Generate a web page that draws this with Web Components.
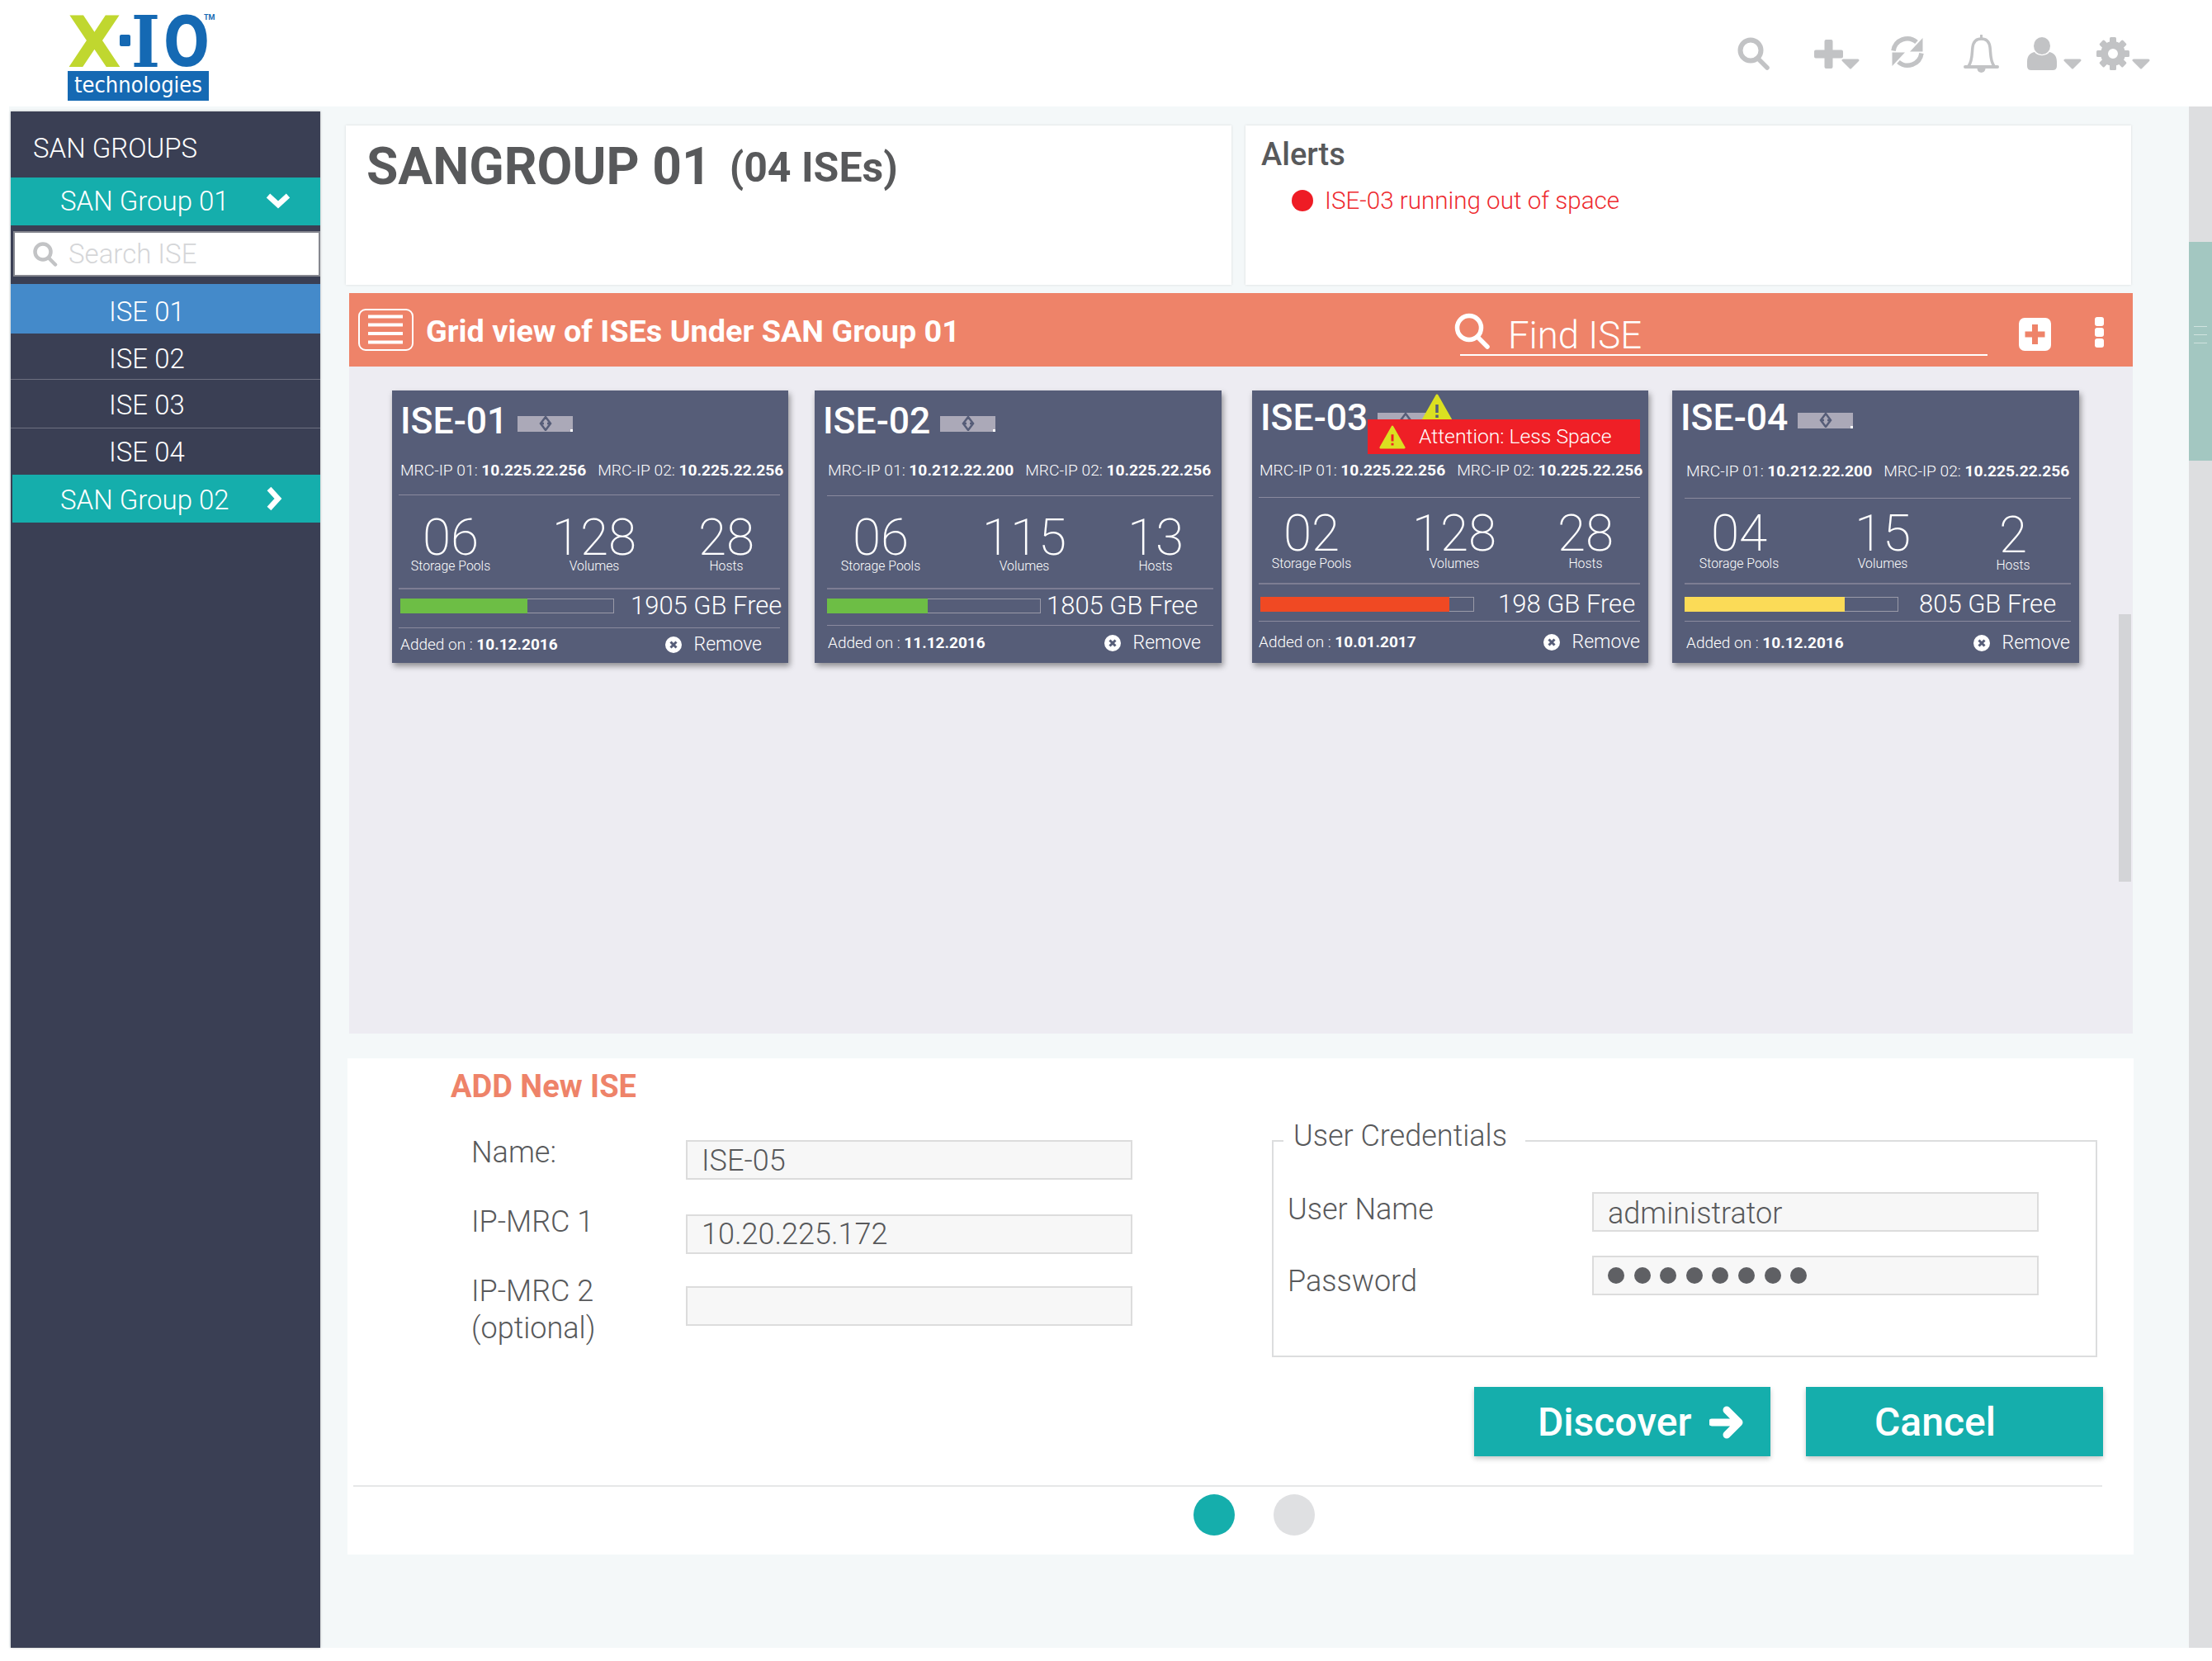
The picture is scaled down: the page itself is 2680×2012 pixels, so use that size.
<!DOCTYPE html>
<html>
<head>
<meta charset="utf-8">
<title>X-IO ISE grid</title>
<style>
  html, body { margin: 0; padding: 0; background: #fff; }
  body { font-family: Roboto, "Liberation Sans", sans-serif; color: #58595b; }
</style>
</head>
<body>
<xio-app>
  <xio-topbar slot="top"></xio-topbar>
  <xio-sidebar slot="side">
    <xio-nav kind="title">SAN GROUPS</xio-nav>
    <xio-nav kind="group" icon="down">SAN Group 01</xio-nav>
    <xio-search>Search ISE</xio-search>
    <xio-nav kind="active">ISE 01</xio-nav>
    <xio-nav kind="item">ISE 02</xio-nav>
    <xio-nav kind="item" style="height:59px;padding-top:4px">ISE 03</xio-nav>
    <xio-nav kind="last">ISE 04</xio-nav>
    <xio-nav kind="group2" icon="right">SAN Group 02</xio-nav>
  </xio-sidebar>

  <xio-overview>
    <span slot="title">SANGROUP 01</span>
    <span slot="count">(04 ISEs)</span>
    <span slot="alert">ISE-03 running out of space</span>
  </xio-overview>

  <xio-gridbar>Grid view of ISEs Under SAN Group 01</xio-gridbar>

  <xio-grid>
    <ise-card name="ISE-01" added="10.12.2016" free="1905 GB Free" fill="60" color="#6dbe45"
      style="margin-left:52px;width:480px;--r1:127px;--r2:114px;--r3:47px;--mx:8px;--cols:126px 222px 98px;--title-top:15px;--ip-gap:27px;--tx:2px;--ix:2px;--stat-top:20px;--lab:-6px;--bx:2px;--bt:11px;--fx:20px;--rr:22px;--fb:3px;--ft:0px">
      <span slot="ip1">10.225.22.256</span><span slot="ip2">10.225.22.256</span>
      <ise-stat slot="stats" value="06">Storage Pools</ise-stat>
      <ise-stat slot="stats" value="128">Volumes</ise-stat>
      <ise-stat slot="stats" value="28">Hosts</ise-stat>
    </ise-card>
    <ise-card name="ISE-02" added="11.12.2016" free="1805 GB Free" fill="47.5" color="#6dbe45"
      style="margin-left:32px;width:493px;--r1:128px;--r2:113px;--r3:44px;--mx:15px;--cols:130px 218px 100px;--title-top:15px;--ip-gap:27px;--tx:-5px;--ix:1px;--stat-top:19px;--lab:-6px;--bx:0px;--bt:11px;--fx:7px;--rr:15px;--fb:3px;--ft:0px">
      <span slot="ip1">10.212.22.200</span><span slot="ip2">10.225.22.256</span>
      <ise-stat slot="stats" value="06">Storage Pools</ise-stat>
      <ise-stat slot="stats" value="115">Volumes</ise-stat>
      <ise-stat slot="stats" value="13">Hosts</ise-stat>
    </ise-card>
    <ise-card name="ISE-03" added="10.01.2017" free="198 GB Free" fill="89" color="#f04923"
      style="margin-left:37px;width:480px;--r1:130px;--r2:105px;--r3:45px;--mx:8px;--cols:128px 218px 100px;--title-top:11px;--ip-gap:31px;--tx:2px;--ix:1px;--stat-top:12px;--lab:-4px;--bx:2px;--bt:15px;--fx:29px;--rr:-2px;--fb:0px;--ft:2px">
      <span slot="ip1">10.225.22.256</span><span slot="ip2">10.225.22.256</span>
      <ise-stat slot="stats" value="02">Storage Pools</ise-stat>
      <ise-stat slot="stats" value="128">Volumes</ise-stat>
      <ise-stat slot="stats" value="28">Hosts</ise-stat>
      <ise-warning slot="over">Attention: Less Space</ise-warning>
    </ise-card>
    <ise-card name="ISE-04" added="10.12.2016" free="805 GB Free" fill="75.5" color="#fbdb57"
      style="margin-left:29px;width:493px;--r1:131px;--r2:104px;--r3:45px;--mx:15px;--cols:132px 216px 100px;--title-top:11px;--ip-gap:32px;--tx:-5px;--ix:2px;--stat-top:11px;--lab:-4px;--bx:0px;--bt:15px;--fx:25px;--rr:1px;--fb:0px;--ft:2px">
      <span slot="ip1">10.212.22.200</span><span slot="ip2">10.225.22.256</span>
      <ise-stat slot="stats" value="04">Storage Pools</ise-stat>
      <ise-stat slot="stats" value="15">Volumes</ise-stat>
      <ise-stat slot="stats" value="2" style="padding-top:2px">Hosts</ise-stat>
    </ise-card>
  </xio-grid>

  <xio-addform></xio-addform>
</xio-app>

<script>
const GREY = "#c2c3c5";

const caret = `<svg width="22" height="13" viewBox="0 0 22 13"><polygon points="2,2 20,2 11,11" fill="${GREY}" stroke="${GREY}" stroke-width="3" stroke-linejoin="round"/></svg>`;

class XioApp extends HTMLElement {
  constructor() {
    super();
    this.attachShadow({ mode: "open" });
    this.shadowRoot.innerHTML = `
      <style>
        :host { display: block; width: 2680px; height: 2012px; overflow: hidden; background: #fff; }
        .row { display: flex; height: 1867px; margin-left: 11px; background: #f4f8f9; }
        .side { margin: 6px 0 0 2px; }
        .main { margin-left: 31px; width: 2233px; padding-top: 23px; }
        .track { position: relative; width: 28px; height: 100%; background: #dddee0; }
        .thumb { margin-top: 164px; height: 265px; background: #a3c7c1; display: flex; flex-direction: column; align-items: center; padding-top: 102px; box-sizing: border-box; gap: 9px; }
        .thumb i { display: block; width: 16px; height: 1px; background: #d0e3df; }
      </style>
      <slot name="top"></slot>
      <div class="row">
        <div class="side"><slot name="side"></slot></div>
        <div class="main"><slot></slot></div>
        <div class="track"><div class="thumb"><i></i><i></i><i></i></div></div>
      </div>
    `;
  }
}

class XioLogo extends HTMLElement {
  constructor() {
    super();
    this.attachShadow({ mode: "open" });
    this.shadowRoot.innerHTML = `
      <style>:host { display: block; width: 180px; height: 108px; } svg { display: block; overflow: visible; }</style>
      <svg width="180" height="108" viewBox="0 0 180 108">
        <text x="0" y="63" font-family="DejaVu Sans" font-weight="700" font-size="86" fill="#c0d72f" textLength="65" lengthAdjust="spacingAndGlyphs">X</text>
        <rect x="63" y="24" width="13" height="14" rx="2" fill="#1569b3"/>
        <text x="77" y="63" font-family="DejaVu Serif" font-weight="700" font-size="86" fill="#1569b3" textLength="35" lengthAdjust="spacingAndGlyphs">I</text>
        <text x="116" y="62" font-family="DejaVu Sans" font-weight="700" font-size="84" fill="#1569b3" textLength="56" lengthAdjust="spacingAndGlyphs">O</text>
        <text x="165" y="6" font-family="Roboto" font-weight="700" font-size="9" fill="#1569b3">TM</text>
        <rect x="0" y="68" width="171" height="36" fill="#1569b3"/>
        <text x="8" y="94" font-family="DejaVu Sans" font-size="26" fill="#fff" textLength="155" lengthAdjust="spacingAndGlyphs">technologies</text>
      </svg>
    `;
  }
}

class XioTopbar extends HTMLElement {
  constructor() {
    super();
    this.attachShadow({ mode: "open" });
    const gearTeeth = [0, 45, 90, 135, 180, 225, 270, 315]
      .map((a) => `<rect x="16" y="0" width="8" height="9" rx="1.5" transform="rotate(${a} 20 20)"/>`)
      .join("");
    this.shadowRoot.innerHTML = `
      <style>
        :host { display: flex; height: 129px; background: #fff; position: relative; }
        xio-logo { margin: 18px 0 0 82px; }
        .icons { display: flex; align-items: flex-start; margin-left: auto; margin-right: 75px; padding-top: 42px; }
        svg { display: block; }
        .with-caret { display: flex; align-items: flex-start; }
        .with-caret > svg:last-child { margin-top: 29px; }
      </style>
      <xio-logo></xio-logo>
      <div class="icons">
        <svg style="margin-top:3px" width="40" height="40" viewBox="0 0 40 40" fill="none" stroke="${GREY}"><circle cx="16" cy="16" r="12.5" stroke-width="6"/><line x1="25" y1="26" x2="36" y2="37" stroke-width="5.5" stroke-linecap="round"/></svg>
        <div class="with-caret" style="margin-left:53px">
          <svg style="margin:6px -2px 0 0" width="35" height="35" viewBox="0 0 35 35" fill="${GREY}"><path d="M12.5 2q0-2 2-2h6q2 0 2 2v10.500h10.500q2 0 2 2v6q0 2-2 2h-10.500v10.500q0 2-2 2h-6q-2 0-2-2v-10.500h-10.500q-2 0-2-2v-6q0-2 2-2h10.500z"/></svg>
          ${caret}
        </div>
        <svg style="margin:1px 0 0 38px" width="40" height="40" viewBox="0 0 40 40" fill="${GREY}">
          <path d="M3 18.500A17 17 0 0 1 31 8" fill="none" stroke="${GREY}" stroke-width="5.500"/>
          <polygon points="38.500,3 38.500,19.500 23,19.500"/>
          <path d="M37 21.500A17 17 0 0 1 9 32" fill="none" stroke="${GREY}" stroke-width="5.500"/>
          <polygon points="1.500,37 1.500,20.500 17,20.500"/>
        </svg>
        <svg style="margin-left:48px" width="43" height="46" viewBox="0 0 43 46" fill="none" stroke="${GREY}">
          <path d="M6 38C11 32 10 22 11 15C12 8 16 5 21.500 5C27 5 31 8 32 15C33 22 32 32 37 38" stroke-width="3.500"/>
          <line x1="2" y1="39" x2="41" y2="39" stroke-width="4" stroke-linecap="round"/>
          <line x1="21.500" y1="1" x2="21.500" y2="5" stroke-width="3" stroke-linecap="round"/>
          <path d="M16.500 41a5 5 0 0 0 10 0z" fill="${GREY}" stroke="none"/>
        </svg>
        <div class="with-caret" style="margin-left:34px">
          <svg style="margin-top:3px;margin-right:8px" width="36" height="40" viewBox="0 0 36 40" fill="${GREY}"><ellipse cx="18" cy="10.500" rx="10" ry="10.500"/><path d="M0 30C0 22 4 19 9 18C12 23.500 24 23.500 27 18C32 19 36 22 36 30V35Q36 40 31 40H5Q0 40 0 35Z"/></svg>
          ${caret}
        </div>
        <div class="with-caret" style="margin-left:18px">
          <svg style="margin-top:3px;margin-right:3px" width="40" height="40" viewBox="0 0 40 40" fill="${GREY}">${gearTeeth}<circle cx="20" cy="20" r="10.500" fill="none" stroke="${GREY}" stroke-width="9"/></svg>
          ${caret}
        </div>
      </div>
    `;
  }
}

class XioSidebar extends HTMLElement {
  constructor() {
    super();
    this.attachShadow({ mode: "open" });
    this.shadowRoot.innerHTML = `
      <style>:host { display: block; width: 375px; height: 1861px; background: #3a3f54; box-shadow: 0 0 3px rgba(0,0,0,.25); }</style>
      <slot></slot>
    `;
  }
}

class XioNav extends HTMLElement {
  constructor() {
    super();
    this.attachShadow({ mode: "open" });
    const icon = this.getAttribute("icon");
    const arrow =
      icon === "down"
        ? `<svg class="arrow" style="left:309px" width="30" height="22" viewBox="0 0 30 22"><polyline points="3,4 15,15 27,4" fill="none" stroke="#fff" stroke-width="6.500"/></svg>`
        : icon === "right"
        ? `<svg class="arrow" style="left:307px" width="20" height="30" viewBox="0 0 20 30"><polyline points="4,3 15,15 4,27" fill="none" stroke="#fff" stroke-width="6.500"/></svg>`
        : "";
    this.shadowRoot.innerHTML = `
      <style>
        :host { display: flex; align-items: center; position: relative; box-sizing: border-box; font: 300 33px/40px Roboto, sans-serif; color: #fff; }
        :host([kind="title"]) { height: 80px; padding: 10px 0 0 27px; }
        :host([kind="group"]) { height: 58px; padding-left: 60px; background: #15aeac; margin-bottom: 7px; }
        :host([kind="group2"]) { height: 58px; padding: 4px 0 0 58px; background: #15aeac; margin-left: 2px; }
        :host([kind="active"]) { height: 60px; padding: 8px 0 0 119px; background: #448aca; }
        :host([kind="item"]) { height: 56px; padding: 6px 0 0 119px; border-bottom: 1px solid #6d7080; }
        :host([kind="last"]) { height: 56px; padding: 2px 0 0 119px; }
        .arrow { position: absolute; top: 50%; transform: translateY(-50%); }
      </style>
      <slot></slot>${arrow}
    `;
  }
}

class XioSearch extends HTMLElement {
  constructor() {
    super();
    this.attachShadow({ mode: "open" });
    this.shadowRoot.innerHTML = `
      <style>
        :host { display: flex; align-items: center; box-sizing: border-box; width: 372px; height: 55px; margin: 0 0 9px 3px; background: #fff; border: 2px solid #85878f; font: 300 33px/40px Roboto, sans-serif; color: #d5d6d8; }
        svg { margin: 0 13px 0 22px; }
      </style>
      <svg width="30" height="30" viewBox="0 0 30 30" fill="none" stroke="${GREY}"><circle cx="12" cy="12" r="9.500" stroke-width="4.500"/><line x1="19" y1="19.500" x2="27" y2="27.500" stroke-width="4.500" stroke-linecap="round"/></svg>
      <slot></slot>
    `;
  }
}

class XioOverview extends HTMLElement {
  constructor() {
    super();
    this.attachShadow({ mode: "open" });
    this.shadowRoot.innerHTML = `
      <style>
        :host { display: flex; gap: 17px; width: 2163px; height: 193px; }
        .panel { flex: none; width: 1073px; background: #fff; box-shadow: 0 0 3px rgba(0,0,0,.12); box-sizing: border-box; }
        .one { padding: 14px 0 0 25px; display: flex; align-items: baseline; font: 700 62.300px/72px Roboto, sans-serif; color: #58595b; }
        .count { font-size: 50px; margin-left: 22px; transform: translateY(-3px); }
        .two { padding: 12px 0 0 19px; }
        h2 { margin: 0; font: 500 38px/46px Roboto, sans-serif; color: #58595b; }
        .alert { display: flex; align-items: center; margin: 13px 0 0 37px; font: 300 29.600px/40px Roboto, sans-serif; color: #ee2a2f; }
        .alert i { width: 26px; height: 26px; border-radius: 50%; background: #ee1c25; margin-right: 14px; }
      </style>
      <div class="panel one"><slot name="title"></slot><span class="count"><slot name="count"></slot></span></div>
      <div class="panel two">
        <h2>Alerts</h2>
        <div class="alert"><i></i><slot name="alert"></slot></div>
      </div>
    `;
  }
}

class XioGridbar extends HTMLElement {
  constructor() {
    super();
    this.attachShadow({ mode: "open" });
    this.shadowRoot.innerHTML = `
      <style>
        :host { display: flex; align-items: flex-start; box-sizing: border-box; width: 2161px; height: 89px; margin: 10px 0 0 4px; background: #ee8369; color: #fff; padding-right: 35px; }
        .menu { margin: 19px 0 0 11px; display: block; flex: none; }
        .title { margin: 24px 0 0 15px; font: 700 37.800px/44px Roboto, sans-serif; white-space: nowrap; }
        .find { position: relative; box-sizing: border-box; margin: 30px 0 0 auto; width: 639px; height: 46px; border-bottom: 2px solid #fff; padding-left: 58px; font: 300 45.500px/44px Roboto, sans-serif; }
        .find svg { position: absolute; left: -7px; top: -6px; }
        .plus { margin: 30px 0 0 38px; display: block; flex: none; }
        .dots { margin: 29px 0 0 53px; display: flex; flex-direction: column; gap: 2px; }
        .dots i { display: block; width: 11px; height: 11px; border-radius: 3px; background: #fff; }
      </style>
      <svg class="menu" width="67" height="51" viewBox="0 0 67 51" fill="none" stroke="#fff">
        <rect x="1" y="1" width="65" height="49" rx="8" stroke-width="2"/>
        <path d="M12 9.500H54M12 19.500H54M12 30H54M12 40.500H54" stroke-width="4"/>
      </svg>
      <div class="title"><slot></slot></div>
      <div class="find">
        <svg width="44" height="44" viewBox="0 0 44 44" fill="none" stroke="#fff"><circle cx="18" cy="18" r="14.500" stroke-width="5.500"/><line x1="28" y1="29" x2="40" y2="41" stroke-width="5.500" stroke-linecap="round"/></svg>
        Find ISE
      </div>
      <svg class="plus" width="39" height="40" viewBox="0 0 39 40"><rect width="39" height="40" rx="7" fill="#fff"/><path d="M19.500 8V32M7.500 20H31.500" stroke="#ee8369" stroke-width="7"/></svg>
      <div class="dots"><i></i><i></i><i></i></div>
    `;
  }
}

class XioGrid extends HTMLElement {
  constructor() {
    super();
    this.attachShadow({ mode: "open" });
    this.shadowRoot.innerHTML = `
      <style>
        :host { display: flex; align-items: flex-start; position: relative; box-sizing: border-box; width: 2161px; height: 808px; margin-left: 4px; padding-top: 29px; background: #edecf2; }
        .scroll { position: absolute; right: 2px; top: 300px; width: 15px; height: 324px; background: #d3d4d7; }
      </style>
      <slot></slot>
      <div class="scroll"></div>
    `;
  }
}

class IseCard extends HTMLElement {
  constructor() {
    super();
    this.attachShadow({ mode: "open" });
    this.shadowRoot.innerHTML = `
      <style>
        :host { display: block; position: relative; flex: none; height: 330px; background: #565d78; color: #fff; box-shadow: 2px 4px 7px rgba(0,0,0,.4); font-family: Roboto, sans-serif; }
        .inner { display: flex; flex-direction: column; height: 100%; box-sizing: border-box; padding: 0 10px 0 var(--mx); }
        .head { box-sizing: border-box; height: var(--r1); padding-top: var(--title-top); border-bottom: 1px solid #8a8a9e; }
        .name { display: flex; align-items: center; margin-left: var(--tx); font: 500 44.500px/44px Roboto, sans-serif; }
        .badge { position: relative; display: flex; align-items: center; justify-content: center; width: 67px; height: 19px; margin: 6px 0 0 12px; background: #aba9b8; }
        .badge i { position: absolute; right: 0; bottom: 0; width: 3px; height: 3px; background: #fff; }
        .ips { display: flex; gap: 14px; margin: var(--ip-gap) 0 0 var(--ix); font: 300 19.200px/22px Roboto, sans-serif; white-space: nowrap; }
        .ips b { font-weight: 700; }
        .stats { box-sizing: border-box; height: var(--r2); padding-top: var(--stat-top); border-bottom: 2px solid #7d7d93; display: grid; grid-template-columns: var(--cols); align-items: start; --label-gap: var(--lab); }
        .bar { box-sizing: border-box; height: var(--r3); padding: var(--bt) 0 0 var(--bx); border-bottom: 1px solid #8a8a9e; display: flex; align-items: flex-start; }
        .track { flex: none; box-sizing: border-box; width: 259px; height: 18px; border: 1px solid #9a9aa8; }
        .fill { height: 100%; background: var(--fill); margin: -1px 0 0 -1px; padding-bottom: 2px; box-sizing: content-box; }
        .free { margin: -6px 0 0 var(--fx); font: 300 31px/30px Roboto, sans-serif; white-space: nowrap; }
        .foot { flex: 1; display: flex; align-items: center; justify-content: space-between; padding: var(--ft) var(--rr) var(--fb) var(--ix); font: 300 19px/24px Roboto, sans-serif; white-space: nowrap; }
        .foot b { font-weight: 700; }
        .remove { display: flex; align-items: center; gap: 15px; font-size: 23px; }
        svg { display: block; }
      </style>
      <div class="inner">
        <div class="head">
          <div class="name"><span id="name"></span>
            <span class="badge"><svg width="18" height="18" viewBox="0 0 18 18" fill="none" stroke="#565d78" stroke-width="2.500"><path d="M9 1L3 9L9 17L15 9Z"/><path d="M3 9H7M11 9H15"/></svg><i></i></span>
          </div>
          <div class="ips">
            <span>MRC-IP 01: <b><slot name="ip1"></slot></b></span>
            <span>MRC-IP 02: <b><slot name="ip2"></slot></b></span>
          </div>
        </div>
        <div class="stats"><slot name="stats"></slot></div>
        <div class="bar">
          <div class="track"><div class="fill" id="fill"></div></div>
          <span class="free" id="free"></span>
        </div>
        <div class="foot">
          <span>Added on : <b id="added"></b></span>
          <span class="remove">
            <svg width="20" height="20" viewBox="0 0 20 20"><circle cx="10" cy="10" r="10" fill="#fff"/><path d="M6.500 6.500L13.500 13.500M13.500 6.500L6.500 13.500" stroke="#565d78" stroke-width="3"/></svg>
            Remove
          </span>
        </div>
      </div>
      <slot name="over"></slot>
    `;
  }

  connectedCallback() {
    const root = this.shadowRoot;
    root.getElementById("name").textContent = this.getAttribute("name");
    root.getElementById("free").textContent = this.getAttribute("free");
    root.getElementById("added").textContent = this.getAttribute("added");
    const fill = root.getElementById("fill");
    fill.style.width = this.getAttribute("fill") + "%";
    fill.style.setProperty("--fill", this.getAttribute("color"));
  }
}

class IseStat extends HTMLElement {
  constructor() {
    super();
    this.attachShadow({ mode: "open" });
    this.shadowRoot.innerHTML = `
      <style>
        :host { display: flex; flex-direction: column; align-items: center; color: #fff; font-family: Roboto, sans-serif; }
        .num { font: 200 62px/62px Roboto, sans-serif; }
        .lab { margin-top: var(--label-gap, -6px); font: 300 15.800px/20px Roboto, sans-serif; white-space: nowrap; }
      </style>
      <div class="num"></div>
      <div class="lab"><slot></slot></div>
    `;
  }
  connectedCallback() {
    this.shadowRoot.querySelector(".num").textContent = this.getAttribute("value");
  }
}

class IseWarning extends HTMLElement {
  constructor() {
    super();
    this.attachShadow({ mode: "open" });
    const tri = (w, h) => `<svg width="${w}" height="${h}" viewBox="0 0 38 34"><path d="M19 2L36 32H2Z" fill="#dbe021" stroke="#dbe021" stroke-width="3" stroke-linejoin="round"/><path d="M19 13V23M19 25.500V29" stroke="#ef1f26" stroke-width="3.500"/></svg>`;
    this.shadowRoot.innerHTML = `
      <style>
        :host { display: block; }
        .big { position: absolute; left: 205px; top: 4px; }
        .big path:last-child { stroke: #565d78; }
        .banner { position: absolute; left: 140px; top: 35px; width: 330px; height: 42px; display: flex; align-items: center; background: #ef1f26; color: #fff; font: 300 24.700px/30px Roboto, sans-serif; white-space: nowrap; }
        .banner svg { margin: 0 16px 0 14px; }
        svg { display: block; }
      </style>
      <div class="big">${tri(38, 34)}</div>
      <div class="banner">${tri(32, 29)}<slot></slot></div>
    `;
  }
}

class XioField extends HTMLElement {
  constructor() {
    super();
    this.attachShadow({ mode: "open" });
    this.shadowRoot.innerHTML = `
      <style>
        :host { display: flex; align-items: center; box-sizing: border-box; flex: none; width: 541px; height: 48px; padding-left: 17px; background: #f7f7f7; border: 2px solid #dcdcdc; font: 300 36px/44px Roboto, sans-serif; color: #58595b; }
      </style>
      <slot></slot>
    `;
  }
}

class XioAddform extends HTMLElement {
  constructor() {
    super();
    this.attachShadow({ mode: "open" });
    const dots = new Array(8).fill("<i></i>").join("");
    this.shadowRoot.innerHTML = `
      <style>
        :host { display: block; box-sizing: border-box; width: 2164px; height: 601px; margin: 30px 0 0 2px; padding-top: 14px; background: #fff; color: #58595b; font-family: Roboto, sans-serif; }
        h3 { margin: 0 0 0 125px; font: 700 38px/40px Roboto, sans-serif; color: #ee8369; }
        .body { display: flex; align-items: flex-start; margin-top: 24px; }
        .left { width: 951px; padding-top: 21px; flex: none; }
        .right { margin-left: 169px; width: 1007px; }
        .row { display: flex; align-items: flex-start; }
        .label { font: 300 36px/45px Roboto, sans-serif; }
        .left .label { width: 260px; margin-left: 150px; flex: none; }
        fieldset { box-sizing: border-box; width: 1000px; height: 284px; margin: 0; padding: 40px 0 0 17px; border: 2px solid #dcddde; }
        legend { margin-left: -5px; padding: 0 22px 0 12px; font: 300 36px/44px Roboto, sans-serif; transform: translateY(-6px); }
        fieldset .label { width: 369px; flex: none; }
        .dots { display: flex; gap: 11.600px; }
        .dots i { display: block; width: 20px; height: 20px; border-radius: 50%; background: #5f6064; }
        .btns { display: flex; gap: 43px; margin: 36px 0 0 245px; }
        .btn { display: flex; align-items: center; box-sizing: border-box; width: 359px; height: 84px; padding-top: 2px; background: #15aeac; color: #fff; font: 500 48px/56px Roboto, sans-serif; box-shadow: 0 3px 6px rgba(0,0,0,.22); }
        .btn svg { margin-left: 22px; }
        hr { margin: 35px 38px 0 7px; height: 2px; border: 0; background: #e6e7e8; }
        .pager { display: flex; gap: 47px; margin: 9px 0 0 1025px; }
        .pager i { display: block; width: 50px; height: 50px; border-radius: 50%; background: #dfe0e2; }
        .pager i:first-child { background: #15aeac; }
      </style>
      <h3>ADD New ISE</h3>
      <div class="body">
        <div class="left">
          <div class="row" style="margin-bottom:42px"><div class="label" style="margin-top:-7px">Name:</div><xio-field style="padding-top:2px">ISE-05</xio-field></div>
          <div class="row" style="margin-bottom:39px"><div class="label" style="margin-top:-13px">IP-MRC 1</div><xio-field>10.20.225.172</xio-field></div>
          <div class="row"><div class="label" style="margin-top:-16px">IP-MRC 2<br>(optional)</div><xio-field></xio-field></div>
        </div>
        <div class="right">
          <fieldset>
            <legend>User Credentials</legend>
            <div class="row" style="margin-bottom:29px"><div class="label" style="margin-top:-1px">User Name</div><xio-field style="padding-top:4px">administrator</xio-field></div>
            <div class="row"><div class="label" style="margin-top:9px">Password</div><xio-field><div class="dots">${dots}</div></xio-field></div>
          </fieldset>
          <div class="btns">
            <div class="btn" style="padding-left:77px">Discover
              <svg width="42" height="42" viewBox="0 0 42 42"><path d="M3 21H34M21 6L36 21L21 36" fill="none" stroke="#fff" stroke-width="9" stroke-linejoin="round" stroke-linecap="round"/></svg>
            </div>
            <div class="btn" style="padding-left:83px;width:360px">Cancel</div>
          </div>
        </div>
      </div>
      <hr>
      <div class="pager"><i></i><i></i></div>
    `;
  }
}

customElements.define("xio-field", XioField);
customElements.define("xio-logo", XioLogo);
customElements.define("xio-app", XioApp);
customElements.define("xio-topbar", XioTopbar);
customElements.define("xio-sidebar", XioSidebar);
customElements.define("xio-nav", XioNav);
customElements.define("xio-search", XioSearch);
customElements.define("xio-overview", XioOverview);
customElements.define("xio-gridbar", XioGridbar);
customElements.define("xio-grid", XioGrid);
customElements.define("ise-card", IseCard);
customElements.define("ise-stat", IseStat);
customElements.define("ise-warning", IseWarning);
customElements.define("xio-addform", XioAddform);
</script>
</body>
</html>
